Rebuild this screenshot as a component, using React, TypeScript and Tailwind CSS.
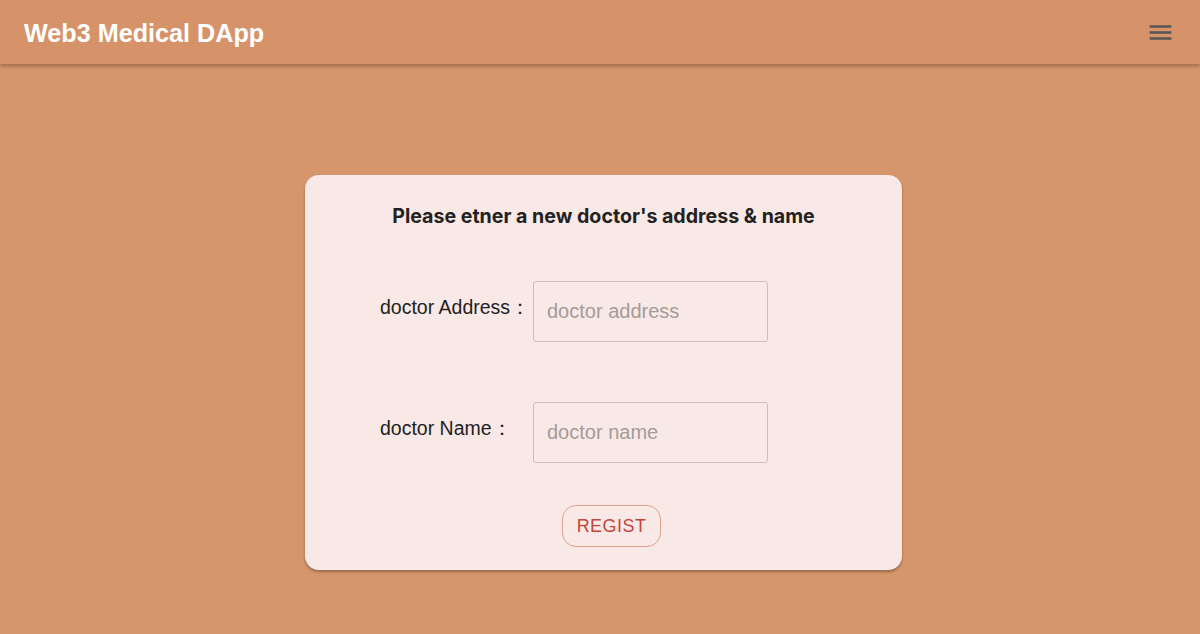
import { useState } from "react";

function MenuIcon() {
  return (
    <svg width="29" height="29" viewBox="0 0 24 24" fill="#555">
      <path d="M3 18h18v-2H3v2zm0-5h18v-2H3v2zm0-7v2h18V6H3z" />
    </svg>
  );
}

function Field({
  label,
  placeholder,
  value,
  onChange,
}: {
  label: string;
  placeholder: string;
  value: string;
  onChange: (v: string) => void;
}) {
  return (
    <div className="flex items-center">
      <label className="w-[153px] text-[19.5px] text-[#222] -mt-2 font-['Liberation_Sans',Arial,sans-serif]">
        {label}
      </label>
      <input
        value={value}
        onChange={(e) => onChange(e.target.value)}
        placeholder={placeholder}
        className="w-[235px] h-[61px] px-[13px] rounded-[3px] border border-[#cdbdbb] bg-[#f9e9e6] text-[20px] text-[#222] placeholder:text-[#a59b99] outline-none font-['Liberation_Sans',Arial,sans-serif]"
      />
    </div>
  );
}

export default function App() {
  const [address, setAddress] = useState("");
  const [name, setName] = useState("");

  return (
    <div className="min-h-[634px] bg-[#d6966b] font-['Liberation_Sans',Arial,sans-serif]">
      <header className="h-16 flex items-center justify-between pl-6 pr-[25px] bg-[#d6936a] shadow-[0_2px_4px_rgba(0,0,0,0.3)]">
        <h1 className="pt-[3px] text-[25.2px] font-bold text-white">Web3 Medical DApp</h1>
        <button className="text-[#555]">
          <MenuIcon />
        </button>
      </header>

      <main className="pt-[111px]">
        <div className="ml-[305px] w-[597px] rounded-[14px] bg-[#f9e9e6] shadow-[0_2px_3px_rgba(0,0,0,0.3)] pt-[30px] pb-[23px]">
          <h2 className="text-center text-[19.6px] font-bold text-[#222] font-['Inter',sans-serif] leading-[22px]">
            Please etner a new doctor's address &amp; name
          </h2>

          <div className="pl-[75px] mt-[54px] flex flex-col gap-[60px]">
            <Field
              label="doctor Address："
              placeholder="doctor address"
              value={address}
              onChange={setAddress}
            />
            <Field
              label="doctor Name："
              placeholder="doctor name"
              value={name}
              onChange={setName}
            />
          </div>

          <div className="flex justify-center mt-[42px]">
            <button className="ml-[16px] w-[99px] h-[42px] rounded-[14px] border border-[#e3a08a] text-[18px] text-[#c4453a] tracking-wide">
              REGIST
            </button>
          </div>
        </div>
      </main>
    </div>
  );
}
